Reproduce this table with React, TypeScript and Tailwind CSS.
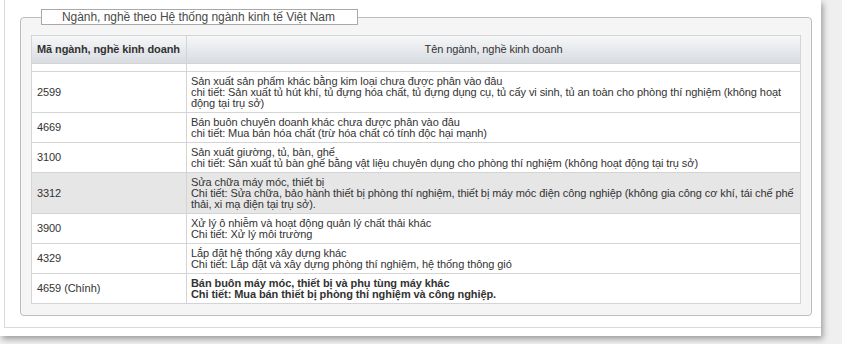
const rows = [
  {
    code: "2599",
    name: "Sản xuất sản phẩm khác bằng kim loại chưa được phân vào đâu",
    detail:
      "chi tiết: Sản xuất tủ hút khí, tủ đựng hóa chất, tủ đựng dụng cụ, tủ cấy vi sinh, tủ an toàn cho phòng thí nghiệm (không hoạt động tại trụ sở)",
  },
  {
    code: "4669",
    name: "Bán buôn chuyên doanh khác chưa được phân vào đâu",
    detail: "chi tiết: Mua bán hóa chất (trừ hóa chất có tính độc hại mạnh)",
  },
  {
    code: "3100",
    name: "Sản xuất giường, tủ, bàn, ghế",
    detail:
      "chi tiết: Sản xuất tủ bàn ghế bằng vật liệu chuyên dụng cho phòng thí nghiệm (không hoạt động tại trụ sở)",
  },
  {
    code: "3312",
    name: "Sửa chữa máy móc, thiết bị",
    detail:
      "Chi tiết: Sửa chữa, bảo hành thiết bị phòng thí nghiệm, thiết bị máy móc điện công nghiệp (không gia công cơ khí, tái chế phế thải, xi mạ điện tại trụ sở).",
    highlight: true,
  },
  {
    code: "3900",
    name: "Xử lý ô nhiễm và hoạt động quản lý chất thải khác",
    detail: "Chi tiết: Xử lý môi trường",
  },
  {
    code: "4329",
    name: "Lắp đặt hệ thống xây dựng khác",
    detail: "Chi tiết: Lắp đặt và xây dựng phòng thí nghiệm, hệ thống thông gió",
  },
  {
    code: "4659 (Chính)",
    name: "Bán buôn máy móc, thiết bị và phụ tùng máy khác",
    detail: "Chi tiết: Mua bán thiết bị phòng thí nghiệm và công nghiệp.",
    main: true,
  },
];

export default function App() {
  return (
    <div className="w-[842px] h-[344px] overflow-hidden bg-[#efefef] font-['Liberation_Sans',Arial,sans-serif]">
      {/* white page with shadow */}
      <div className="w-[821px] h-[336px] bg-white shadow-[2px_3px_6px_rgba(0,0,0,0.35)] pl-[4px]">
        <div className="h-[328px] border-l border-b border-[#d9d9d9] pt-[9px] pl-[15px]">
          <fieldset className="w-[792px] border border-[#bdbdbd] rounded-[4px] bg-[#f5f5f5] px-[10px] pb-[11px] pt-[10px]">
            <legend className="ml-[10px] w-[317px] h-[16px] bg-white border border-[#a9a9a9] pl-[20px] whitespace-nowrap text-[12px] leading-[14px] tracking-[-0.05px] text-[#4a4a4a]">
              Ngành, nghề theo Hệ thống ngành kinh tế Việt Nam
            </legend>

            <table className="w-[770px] border-collapse bg-white text-[11px] leading-[11px] tracking-[-0.08px] text-[#333]">
              <colgroup>
                <col className="w-[155px]" />
                <col />
              </colgroup>
              <thead>
                <tr className="h-[28px] bg-[linear-gradient(to_bottom,#f6f7f8,#d7dbe0)]">
                  <th className="border border-[#d4d4d4] px-[5px] text-left font-bold whitespace-nowrap tracking-[-0.1px]">
                    Mã ngành, nghề kinh doanh
                  </th>
                  <th className="border border-[#d4d4d4] px-[4px] text-center font-normal">
                    Tên ngành, nghề kinh doanh
                  </th>
                </tr>
              </thead>
              <tbody>
                <tr className="h-[8px]">
                  <td className="border border-[#d4d4d4] p-0"></td>
                  <td className="border border-[#d4d4d4] p-0"></td>
                </tr>
                {rows.map((r) => (
                  <tr key={r.code} className={r.highlight ? "bg-[#e6e6e6]" : ""}>
                    <td className="border border-[#d4d4d4] px-[5px] align-middle">{r.code}</td>
                    <td
                      className={`border border-[#d4d4d4] pl-[4px] pr-[4px] pt-[4px] pb-[3px] align-top ${
                        r.main ? "font-bold" : ""
                      }`}
                    >
                      <div>{r.name}</div>
                      <div>{r.detail}</div>
                    </td>
                  </tr>
                ))}
              </tbody>
            </table>
          </fieldset>
        </div>
      </div>
    </div>
  );
}
